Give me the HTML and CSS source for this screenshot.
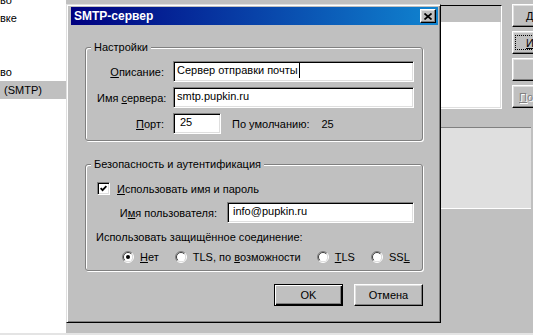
FILE: index.html
```html
<!DOCTYPE html>
<html lang="ru">
<head>
    <meta charset="UTF-8">
    <title>SMTP-сервер</title>
    <link rel="stylesheet" href="styles.css">
</head>
<body>
    <!-- parent window behind the dialog -->
    <div class="desktop">
        <div class="accounts">
            <div class="acc-row">во</div>
            <div class="acc-row">вке</div>
            <div class="acc-row"></div>
            <div class="acc-row"></div>
            <div class="acc-row">во</div>
            <div class="acc-row selected">(SMTP)</div>
        </div>
        <div class="parent-face"></div>
        <div class="parent-side">
            <div class="side-top">
                <div class="side-list"><div class="side-list-head"></div></div>
                <div class="side-buttons">
                    <div class="btn side-btn"><span><u>Д</u>обавить</span></div>
                    <div class="btn side-btn focused"><span><u>И</u>зменить</span></div>
                    <div class="btn side-btn"></div>
                    <div class="btn side-btn disabled"><span><u>П</u>о умолчанию</span></div>
                </div>
            </div>
            <div class="side-panel"></div>
        </div>
    </div>

    <!-- SMTP dialog -->
    <div class="dialog">
        <div class="titlebar">
            <span class="title">SMTP-сервер</span>
            <div class="close-btn">
                <svg width="8" height="7" viewBox="0 0 8 7"><path d="M0.5 0.5 L7.5 6.5 M7.5 0.5 L0.5 6.5" stroke="#000" stroke-width="1.7" fill="none"/></svg>
            </div>
        </div>

        <div class="dialog-body">
            <div class="group">
                <div class="group-title">Настройки</div>
                <div class="form-grid">
                    <label><u>О</u>писание:</label>
                    <div class="field">Сервер отправки почты<span class="caret"></span></div>
                    <label>Имя <u>с</u>ервера:</label>
                    <div class="field">smtp.pupkin.ru</div>
                    <label><u>П</u>орт:</label>
                    <div class="port-row">
                        <div class="field port">25</div>
                        <span class="default-label">По умолчанию:</span>
                        <span class="default-value">25</span>
                    </div>
                </div>
            </div>

            <div class="group security">
                <div class="group-title">Безопасность и аутентификация</div>
                <div class="check-row">
                    <span class="checkbox">
                        <svg width="7" height="7" viewBox="0 0 7 7"><path d="M0.6 3.1 L2.6 5.1 L6.4 1.2" stroke="#000" stroke-width="1.8" fill="none"/></svg>
                    </span>
                    <span><u>И</u>спользовать имя и пароль</span>
                </div>
                <div class="user-row">
                    <label>И<u>м</u>я пользователя:</label>
                    <div class="field user">info@pupkin.ru</div>
                </div>
                <div class="secure-caption">Использовать защищённое соединение:</div>
                <div class="radio-row">
                    <span class="radio-item">
                        <svg class="radio" width="12" height="12" viewBox="0 0 12 12">
                            <path d="M2.1 9.9 A5.5 5.5 0 0 1 9.9 2.1" stroke="#808080" fill="none"/>
                            <path d="M9.9 2.1 A5.5 5.5 0 0 1 2.1 9.9" stroke="#fff" fill="none"/>
                            <circle cx="6" cy="6" r="4.5" fill="#fff"/>
                            <path d="M2.8 9.2 A4.5 4.5 0 0 1 9.2 2.8" stroke="#404040" fill="none"/>
                            <circle cx="6" cy="6" r="2" fill="#000"/>
                        </svg>
                        <span><u>Н</u>ет</span>
                    </span>
                    <span class="radio-item">
                        <svg class="radio" width="12" height="12" viewBox="0 0 12 12">
                            <path d="M2.1 9.9 A5.5 5.5 0 0 1 9.9 2.1" stroke="#808080" fill="none"/>
                            <path d="M9.9 2.1 A5.5 5.5 0 0 1 2.1 9.9" stroke="#fff" fill="none"/>
                            <circle cx="6" cy="6" r="4.5" fill="#fff"/>
                            <path d="M2.8 9.2 A4.5 4.5 0 0 1 9.2 2.8" stroke="#404040" fill="none"/>
                        </svg>
                        <span>TLS, по <u>в</u>озможности</span>
                    </span>
                    <span class="radio-item">
                        <svg class="radio" width="12" height="12" viewBox="0 0 12 12">
                            <path d="M2.1 9.9 A5.5 5.5 0 0 1 9.9 2.1" stroke="#808080" fill="none"/>
                            <path d="M9.9 2.1 A5.5 5.5 0 0 1 2.1 9.9" stroke="#fff" fill="none"/>
                            <circle cx="6" cy="6" r="4.5" fill="#fff"/>
                            <path d="M2.8 9.2 A4.5 4.5 0 0 1 9.2 2.8" stroke="#404040" fill="none"/>
                        </svg>
                        <span><u>T</u>LS</span>
                    </span>
                    <span class="radio-item">
                        <svg class="radio" width="12" height="12" viewBox="0 0 12 12">
                            <path d="M2.1 9.9 A5.5 5.5 0 0 1 9.9 2.1" stroke="#808080" fill="none"/>
                            <path d="M9.9 2.1 A5.5 5.5 0 0 1 2.1 9.9" stroke="#fff" fill="none"/>
                            <circle cx="6" cy="6" r="4.5" fill="#fff"/>
                            <path d="M2.8 9.2 A4.5 4.5 0 0 1 9.2 2.8" stroke="#404040" fill="none"/>
                        </svg>
                        <span>SS<u>L</u></span>
                    </span>
                </div>
            </div>

            <div class="dialog-buttons">
                <div class="btn dlg-btn default">OK</div>
                <div class="btn dlg-btn">Отмена</div>
            </div>
        </div>
    </div>
</body>
</html>
```

FILE: styles.css
```css
* {
    box-sizing: border-box;
}
body {
    margin: 0;
    background: #e4e4e4;
    font-family: "Liberation Sans", Arial, sans-serif;
    font-size: 11px;
    color: #000;
    overflow: hidden;
}
u {
    text-decoration: underline;
}

/* parent window */
.desktop {
    display: flex;
    width: 533px;
    height: 333px;
    overflow: hidden;
    background: #c0c0c0;
}
.accounts {
    width: 66px;
    flex-shrink: 0;
    background: #fff;
}
.acc-row {
    height: 18px;
    line-height: 18px;
    white-space: nowrap;
}
.acc-row:first-child {
    margin-top: -9px;
}
.acc-row.selected {
    background: #c0c0c0;
    padding-left: 4px;
}
.parent-face {
    flex: 1;
}
.parent-side {
    width: 92px;
    flex-shrink: 0;
}
.side-top {
    display: flex;
    align-items: flex-start;
}
.side-list {
    width: 61px;
    height: 104px;
    flex-shrink: 0;
    margin-top: 5px;
    background: #fff;
    border-top: 1px solid #000;
    border-right: 1px solid #fff;
    border-bottom: 1px solid #fff;
    box-shadow: inset -1px -1px #dfdfdf;
}
.side-list-head {
    height: 16px;
    background: #c0c0c0;
}
.side-buttons {
    display: flex;
    flex-direction: column;
    gap: 4px;
    width: 78px;
    flex-shrink: 0;
    margin: 4px 0 0 10px;
}
.side-panel {
    width: 90px;
    height: 82px;
    margin-top: 18px;
    background: #dfdfdf;
    border-top: 1px solid #808080;
    border-bottom: 1px solid #fff;
}

/* classic buttons */
.btn {
    display: flex;
    align-items: center;
    justify-content: center;
    height: 23px;
    background: #c0c0c0;
    border: 1px solid;
    border-color: #fff #000 #000 #fff;
    box-shadow: inset -1px -1px #808080, inset 1px 1px #dfdfdf;
    white-space: nowrap;
}
.side-btn {
    justify-content: flex-start;
    padding-left: 13px;
}
.side-btn.focused {
    position: relative;
}
.side-btn.focused:after {
    content: "";
    position: absolute;
    top: 3px;
    left: 2px;
    right: 3px;
    bottom: 3px;
    border: 1px dotted #000;
}
.side-btn.disabled {
    padding-left: 6px;
    color: #808080;
    text-shadow: 1px 1px #fff;
}

/* dialog */
.dialog {
    position: absolute;
    left: 66px;
    top: 4px;
    width: 375px;
    height: 319px;
    padding: 2px 2px 2px 4px;
    background: #c0c0c0;
    border: 1px solid;
    border-color: #dfdfdf #000 #000 #dfdfdf;
    box-shadow: inset 1px 1px #fff, inset -1px -1px #808080;
}
.titlebar {
    display: flex;
    align-items: center;
    justify-content: space-between;
    height: 18px;
    padding: 0 2px 0 3px;
    background: linear-gradient(to right, #000080, #1084d0);
}
.title {
    color: #fff;
    font-weight: bold;
    font-size: 12px;
}
.close-btn {
    display: flex;
    align-items: center;
    justify-content: center;
    width: 16px;
    height: 14px;
    background: #c0c0c0;
    border: 1px solid;
    border-color: #fff #000 #000 #fff;
    box-shadow: inset -1px -1px #808080, inset 1px 1px #dfdfdf;
}
.dialog-body {
    padding: 22px 15px 0 14px;
}
.group {
    padding: 0 8px 6px 11px;
    border: 1px solid #808080;
    border-radius: 3px;
    box-shadow: 1px 1px 0 #fff, inset 1px 1px 0 #fff;
}
.group.security {
    margin-top: 23px;
}
.group-title {
    width: fit-content;
    margin: -7px 0 0 -6px;
    padding: 0 3px;
    line-height: 13px;
    background: #c0c0c0;
}
.form-grid {
    display: grid;
    grid-template-columns: 67px 241px;
    grid-auto-rows: 21px;
    column-gap: 9px;
    row-gap: 5px;
    align-items: center;
    margin-top: 7px;
}
.form-grid label {
    text-align: right;
    white-space: nowrap;
}
.field {
    position: relative;
    height: 21px;
    line-height: 17px;
    padding-left: 3px;
    background: #fff;
    border: 1px solid;
    border-color: #808080 #fff #fff #808080;
    box-shadow: inset 1px 1px #000, inset -1px -1px #dfdfdf;
    white-space: nowrap;
    overflow: hidden;
}
.caret {
    display: inline-block;
    width: 1px;
    height: 15px;
    margin-left: 1px;
    vertical-align: -4px;
    background: #000;
}
.port-row {
    display: flex;
    align-items: center;
}
.field.port {
    width: 48px;
    padding-left: 6px;
}
.default-label {
    margin-left: 11px;
}
.default-value {
    margin-left: 12px;
}
.check-row {
    display: flex;
    align-items: center;
    gap: 7px;
    height: 15px;
    margin-top: 10px;
}
.checkbox {
    display: flex;
    align-items: center;
    justify-content: center;
    width: 13px;
    height: 13px;
    background: #fff;
    border: 1px solid;
    border-color: #808080 #fff #fff #808080;
    box-shadow: inset 1px 1px #000, inset -1px -1px #dfdfdf;
}
.user-row {
    display: flex;
    align-items: center;
    justify-content: flex-end;
    gap: 10px;
    margin-top: 6px;
}
.field.user {
    width: 187px;
    padding-left: 5px;
}
.secure-caption {
    margin: 8px 0 0 -1px;
    line-height: 13px;
}
.radio-row {
    display: flex;
    align-items: center;
    gap: 16px;
    height: 14px;
    margin: 6px 0 0 25px;
}
.radio-item {
    display: flex;
    align-items: center;
    gap: 6px;
    white-space: nowrap;
}
.dialog-buttons {
    display: flex;
    justify-content: flex-end;
    gap: 11px;
    margin-top: 13px;
}
.dlg-btn {
    width: 69px;
    height: 22px;
}
.dlg-btn.default {
    border-color: #000;
    box-shadow: inset 1px 1px #fff, inset -1px -1px #000, inset -2px -2px #808080;
}
```
